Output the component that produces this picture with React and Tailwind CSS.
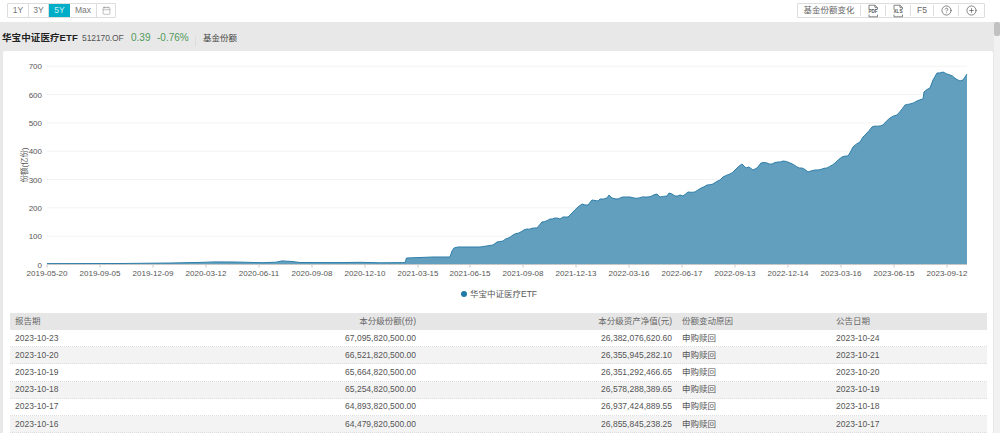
import React from "react";
import { Calendar, CircleHelp, CirclePlus } from "lucide-react";

const base = [[47,263.6],[120,263.5],[170,263],[200,262.4],[215,261.9],[235,262],[262,262.7],[276,262.2],[282,260.9],[292,261.5],[300,262.5],[340,262.6],[360,262.3],[380,262.8],[405,262.6],[406.5,258],[433,257],[450,257],[452,251],[454,248],[458,247],[480,247],[493,245],[497,242],[503,241],[513,235],[527,229],[537,228],[542,222],[555,218],[560,219],[563,217],[568,217],[572,213],[578,207],[582,204],[588,205],[592,200],[598,201],[600,199],[607,198],[609,195],[612,198],[618,199],[623,197],[630,197],[634,198],[648,197],[657,194],[660,197],[667,196],[669,193],[675,196],[680,195],[683,196],[688,192],[695,192],[707,185],[713,184],[720,180],[723,177],[730,174],[735,170],[742,164],[746,168],[749,167],[753,170],[757,168],[761,163],[767,163],[772,164],[778,162],[783,161],[790,163],[797,167],[802,168],[808,172],[815,170],[827,168],[835,163],[842,157],[848,156],[853,147],[860,142],[863,137],[872,127],[883,125],[890,118],[897,115],[905,105],[910,104],[917,101],[923,99],[924,92],[930,88],[933,80],[937,73],[943,72],[950,75],[960,81],[963,80],[967,74]];

const pts = [];
base.forEach((p, i) => {
  pts.push(p);
  const n = base[i + 1];
  if (!n || p[0] < 500) return;
  const steps = Math.floor((n[0] - p[0]) / 2.5);
  for (let s = 1; s < steps; s++) {
    const t = s / steps;
    const x = p[0] + (n[0] - p[0]) * t;
    const y = p[1] + (n[1] - p[1]) * t + Math.sin(x * 1.7) * 0.5;
    pts.push([+x.toFixed(1), +y.toFixed(1)]);
  }
});
const line = pts.map((p, i) => (i ? "L" : "M") + p[0] + " " + p[1]).join(" ");
const area = line + " L967 264.5 L47 264.5 Z";
const yTicks = [700, 600, 500, 400, 300, 200, 100, 0];
const xTicks = [["2019-05-20",47],["2019-09-05",100],["2019-12-09",153],["2020-03-12",206],["2020-06-11",259],["2020-09-08",312],["2020-12-10",365],["2021-03-15",418],["2021-06-15",470],["2021-09-08",523],["2021-12-13",576],["2022-03-16",629],["2022-06-17",682],["2022-09-13",735],["2022-12-14",788],["2023-03-16",841],["2023-06-15",894],["2023-09-12",947]];
const rows = [
  ["2023-10-23","67,095,820,500.00","26,382,076,620.60","申购赎回","2023-10-24"],
  ["2023-10-20","66,521,820,500.00","26,355,945,282.10","申购赎回","2023-10-21"],
  ["2023-10-19","65,664,820,500.00","26,351,292,466.65","申购赎回","2023-10-20"],
  ["2023-10-18","65,254,820,500.00","26,578,288,389.65","申购赎回","2023-10-19"],
  ["2023-10-17","64,893,820,500.00","26,937,424,889.55","申购赎回","2023-10-18"],
  ["2023-10-16","64,479,820,500.00","26,855,845,238.25","申购赎回","2023-10-17"],
];
const gridCols = "grid grid-cols-[150px_261px_256px_154px_156px] items-center";

function DocIcon({ label }) {
  return (
    <svg width="14" height="14" viewBox="0 0 14 14" fill="none" stroke="#666" strokeWidth="0.8">
      <path d="M3 5V1.2H9L11.5 3.7V5M3 10.5V12.8H11.5V10.5M9 1.2V3.7H11.5" />
      <rect x="0.6" y="5.2" width="13" height="5" fill="#fff" stroke="none" />
      <text x="7" y="9.4" textAnchor="middle" fontSize="4.6" fontWeight="700" fill="#555" stroke="none" fontFamily="Liberation Sans">{label}</text>
    </svg>
  );
}

function Seg({ children, active, className = "" }) {
  return (
    <div className={`h-full flex items-center justify-center ${active ? "bg-[#00aec7] text-[#cfeff4]" : "text-[#777] border-r border-[#ddd]"} ${className}`}>{children}</div>
  );
}

export default function App() {
  return (
    <div className="w-[1000px] h-[433px] overflow-hidden bg-white flex flex-col text-[#555] font-['Liberation_Sans','Noto_Sans_CJK_SC',sans-serif]">
      <div className="h-[22px] shrink-0 flex items-start justify-between pt-[3px] pl-[7px] pr-[15px] text-[8.5px]">
        <div className="flex h-[15px] border border-[#ddd] rounded-[1px]">
          <Seg className="w-[21px]">1Y</Seg>
          <Seg className="w-[20px]">3Y</Seg>
          <Seg active className="w-[21px]">5Y</Seg>
          <Seg className="w-[27px]">Max</Seg>
          <Seg className="w-[18px] border-r-0"><Calendar size={9} strokeWidth={1.2} /></Seg>
        </div>
        <div className="flex items-center h-[15px] border border-[#ddd] rounded-[1px] text-[#666]">
          <div className="w-[63px] text-center border-r border-[#ddd] leading-[11px]">基金份额变化</div>
          <div className="w-[25px] h-[11px] flex items-center justify-center border-r border-[#ddd]"><DocIcon label="PDF" /></div>
          <div className="w-[25px] h-[11px] flex items-center justify-center border-r border-[#ddd]"><DocIcon label="XLS" /></div>
          <div className="w-[23px] h-[11px] flex items-center justify-center border-r border-[#ddd]">F5</div>
          <div className="w-[25px] h-[11px] flex items-center justify-center border-r border-[#ddd] text-[#555]"><CircleHelp size={11} strokeWidth={1.5} /></div>
          <div className="w-[25px] h-[11px] flex items-center justify-center text-[#555]"><CirclePlus size={11} strokeWidth={1.5} /></div>
        </div>
      </div>

      <div className="flex-1 flex min-h-0">
        <div className="flex-1 min-w-0 bg-[#e8e8e8] flex flex-col">
          <div className="h-[29px] shrink-0 flex items-baseline pl-[2px] pt-[9px] leading-[14px]">
            <span className="text-[9.5px] font-bold text-[#222] w-[80px] tracking-[0.1px]">华宝中证医疗ETF</span>
            <span className="text-[8.5px] text-[#555] w-[49px] tracking-[-0.1px]">512170.OF</span>
            <span className="text-[10px] text-[#4f9a58] w-[26px]">0.39</span>
            <span className="text-[10px] text-[#4f9a58] w-[38px]">-0.76%</span>
            <span className="w-px h-[10px] bg-[#ddd] mr-[7px] self-center"></span>
            <span className="text-[8.5px] text-[#444]">基金份额</span>
          </div>
          <div className="flex-1 ml-[3px] mr-px bg-white rounded-t-[2px] flex flex-col min-h-0">
            <svg width="991" height="234" viewBox="3 51 991 234" className="shrink-0 block" fontFamily="Liberation Sans, Noto Sans CJK SC, sans-serif">
              {yTicks.map((v) => {
                const y = 264.5 - v * 0.2832;
                return (
                  <g key={v}>
                    {v !== 0 && <line x1="47" x2="967" y1={y} y2={y} stroke="#f3f3f3" strokeWidth="1" />}
                    <text x="42" y={y + 3} textAnchor="end" fontSize="8" fill="#555">{v}</text>
                  </g>
                );
              })}
              <text transform="translate(27 165) rotate(-90)" textAnchor="middle" fontSize="7.5" fill="#555">份额(亿份)</text>
              <path d={area} fill="#629fbf" />
              <path d={line} fill="none" stroke="#2f7fa9" strokeWidth="1" strokeLinejoin="round" />
              <line x1="47" x2="967" y1="264.5" y2="264.5" stroke="#c8c8c8" strokeWidth="1" />
              {xTicks.map(([t, x]) => (
                <g key={t}>
                  <line x1={x} x2={x} y1="264.5" y2="267.5" stroke="#c8c8c8" strokeWidth="1" />
                  <text x={x} y="276" textAnchor="middle" fontSize="8" fill="#555">{t}</text>
                </g>
              ))}
            </svg>
            <div className="h-[20px] shrink-0 flex items-center justify-center gap-[3px] text-[8.5px] text-[#555] pb-[2px] pl-[2px]">
              <span className="w-[6px] h-[6px] rounded-full bg-[#2179a7]"></span>
              <span>华宝中证医疗ETF</span>
            </div>
            <div className="mt-[8px] ml-[7px] w-[977px] text-[8.5px] text-[#555]">
              <div className={`${gridCols} h-[17px] bg-[#e6e6e6] text-[#666]`}>
                <div className="pl-[5px]">报告期</div>
                <div className="text-right pr-[5px]">本分级份额(份)</div>
                <div className="text-right pr-[5px]">本分级资产净值(元)</div>
                <div className="pl-[5px]">份额变动原因</div>
                <div className="pl-[5px]">公告日期</div>
              </div>
              {rows.map((r, i) => (
                <div key={r[0]} className={`${gridCols} h-[17.2px] border-b border-dotted border-[#ddd] ${i % 2 ? "bg-[#f3f3f3]" : "bg-white"}`}>
                  <div className="pl-[5px]">{r[0]}</div>
                  <div className="text-right pr-[5px]">{r[1]}</div>
                  <div className="text-right pr-[5px]">{r[2]}</div>
                  <div className="pl-[5px]">{r[3]}</div>
                  <div className="pl-[5px]">{r[4]}</div>
                </div>
              ))}
            </div>
          </div>
        </div>
        <div className="w-[6px] shrink-0 bg-[#f1f1f1]">
          <div className="h-[14px] bg-[#c1c1c1] rounded-[2px]"></div>
        </div>
      </div>
    </div>
  );
}
